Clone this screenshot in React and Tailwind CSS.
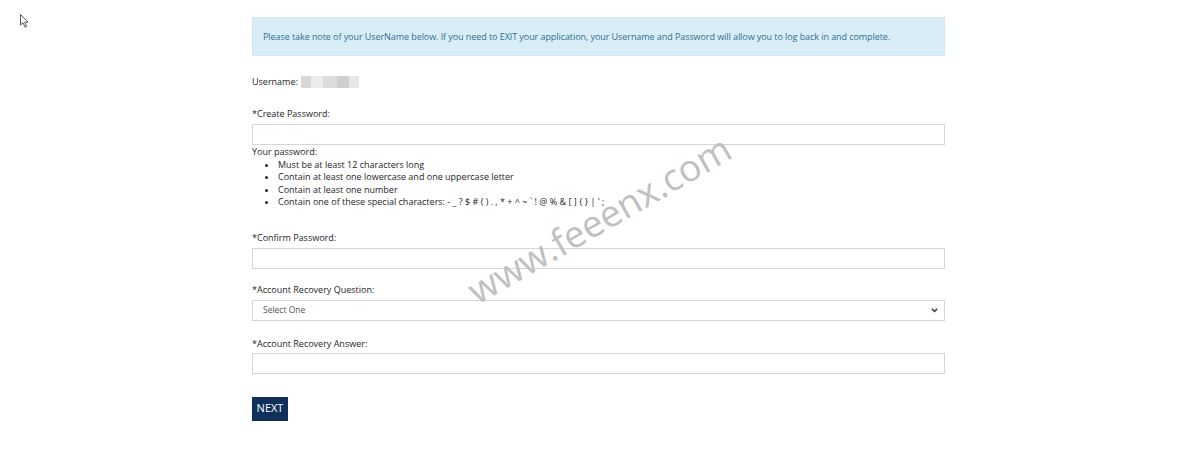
export default function App() {
  const font = { fontFamily: '"Open Sans", "Noto Sans", sans-serif' };
  return (
    <div className="relative w-[1200px] h-[449px] bg-white overflow-hidden text-[#262626]" style={font}>
      <svg className="absolute left-[20px] top-[14px]" width="10" height="15" viewBox="0 0 10 15">
        <path d="M0.5 0.5 L0.5 11 L3 8.7 L5 13.2 L6.6 12.5 L4.7 8.2 L8 8.2 Z" fill="white" stroke="#444" strokeWidth="0.9" strokeLinejoin="round" />
      </svg>
      <div className="ml-[252px] w-[693px] pt-[17px]">
        <div className="h-[39px] bg-[#d9edf7] border border-[#d0e8f3] flex items-center pl-[10px] text-[9px] tracking-[-0.07px] text-[#31708f]">
          Please take note of your UserName below. If you need to EXIT your application, your Username and Password will allow you to log back in and complete.
        </div>
        <div className="mt-[19px] flex items-center text-[9px] h-[14px]">
          <span>Username:</span>
          <span className="ml-[3px] flex h-[12px]">
            <span className="w-[10px] bg-[#d8d8d8]" />
            <span className="w-[12px] bg-[#ececec]" />
            <span className="w-[14px] bg-[#dcdcdc]" />
            <span className="w-[12px] bg-[#cfcfcf]" />
            <span className="w-[10px] bg-[#e6e6e6]" />
          </span>
        </div>
        <div className="mt-[19px] text-[9px] leading-[12px]">*Create Password:</div>
        <div className="mt-[4px] h-[21px] border border-[#d6d6d6] bg-white" />
        <div className="mt-[1px] text-[9px] leading-[12.5px]">
          <div>Your password:</div>
          <ul className="list-disc pl-[26px]">
            <li>Must be at least 12 characters long</li>
            <li>Contain at least one lowercase and one uppercase letter</li>
            <li>Contain at least one number</li>
            <li>Contain one of these special characters: - _ ? $ # ( ) . , * + ^ ~ ` ! @ % &amp; [ ] {'{'} {'}'} | ' ;</li>
          </ul>
        </div>
        <div className="mt-[23px] text-[9px] leading-[12px]">*Confirm Password:</div>
        <div className="mt-[4px] h-[21px] border border-[#d6d6d6] bg-white" />
        <div className="mt-[15px] text-[9px] leading-[12px]">*Account Recovery Question:</div>
        <div className="mt-[4px] h-[21px] border border-[#d6d6d6] bg-white flex items-center justify-between pl-[10px] pr-[6px] text-[8.5px] text-[#555]">
          <span>Select One</span>
          <svg width="7" height="5" viewBox="0 0 7 5"><path d="M0.8 0.8 L3.5 3.6 L6.2 0.8" fill="none" stroke="#333" strokeWidth="1.4" /></svg>
        </div>
        <div className="mt-[17px] text-[9px] leading-[12px]">*Account Recovery Answer:</div>
        <div className="mt-[3px] h-[21px] border border-[#d6d6d6] bg-white" />
        <button className="mt-[23px] h-[24px] w-[36px] bg-[#0f2f5c] text-white text-[11px] flex items-center justify-center" style={font}>NEXT</button>
      </div>
      <div className="absolute left-[449px] top-[197px] w-[300px] text-center text-[37px] leading-[44px] text-[#c0c0c0] -rotate-[30deg] select-none" style={{ fontFamily: '"Open Sans", sans-serif' }}>
        www.feeenx.com
      </div>
    </div>
  );
}
